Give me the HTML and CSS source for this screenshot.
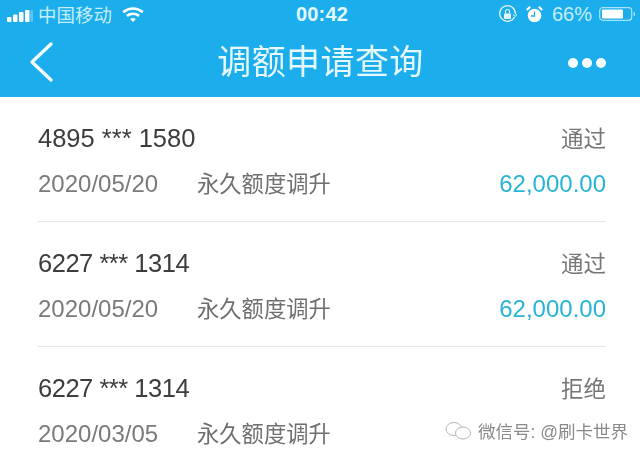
FILE: index.html
```html
<!DOCTYPE html>
<html lang="zh">
<head>
<meta charset="utf-8">
<title>调额申请查询</title>
<link rel="stylesheet" href="styles.css">
</head>
<body>
<div class="page">
  <header class="top">
    <div class="status">
      <div class="status-left">
        <svg class="signal" width="26" height="14" viewBox="0 0 26 14"><rect x="0" y="8" width="4.500" height="5" rx="1" fill="#fff"/><rect x="6" y="5.500" width="4.500" height="7.500" rx="1" fill="#fff"/><rect x="12" y="3" width="4.500" height="10" rx="1" fill="#fff"/><rect x="18" y="1" width="4.500" height="12" rx="1" fill="#fff"/><rect x="23.500" y="1" width="2.500" height="12" rx="1" fill="#fff" opacity=".3"/></svg>
        <span class="carrier">中国移动</span>
        <svg class="wifi" width="24" height="15" viewBox="0 0 24 16"><path d="M1.500 5.500C8 .5 16 .5 22.500 5.500" fill="none" stroke="#fff" stroke-width="2.800"/><path d="M5.500 9.500c3.900-3 9.100-3 13 0" fill="none" stroke="#fff" stroke-width="2.800"/><path d="M9 12.800c1.800-1.300 4.200-1.300 6 0L12 16z" fill="#fff"/></svg>
      </div>
      <div class="clock">00:42</div>
      <div class="status-right">
        <svg class="lock" width="19" height="19" viewBox="0 0 19 19"><path d="M16.500 12A7.800 7.800 0 1 1 17.300 9" fill="none" stroke="#e6f8ff" stroke-width="1.300"/><path d="M15 9.500l2.300 2 1.700-2.500" fill="none" stroke="#e6f8ff" stroke-width="1"/><rect x="6" y="8.500" width="7" height="5.500" rx="1" fill="#e6f8ff"/><path d="M7.500 8.500V6.500a2 2 0 0 1 4 0V8.500" fill="none" stroke="#e6f8ff" stroke-width="1.200"/></svg>
        <svg class="alarm" width="19" height="19" viewBox="0 0 19 19"><circle cx="9.500" cy="10.500" r="6.800" fill="#fff"/><path d="M9.500 6.500V11H6" fill="none" stroke="#1badec" stroke-width="1.300"/><path d="M1.800 5 5.200 1.800M17.200 5 13.800 1.800" stroke="#fff" stroke-width="2.200"/></svg>
        <span class="battery-text">66%</span>
        <svg width="37" height="16" viewBox="0 0 37 16"><rect x=".7" y="1.700" width="32" height="12.600" rx="3" fill="none" stroke="#a8e4fa" stroke-width="1.200"/><rect x="3" y="3.500" width="21" height="9" rx="1" fill="#fff"/><rect x="34.500" y="6" width="1.500" height="4" rx=".7" fill="#a8e4fa"/></svg>
      </div>
    </div>
    <div class="nav">
      <svg class="back" width="26" height="42" viewBox="0 0 26 42"><path d="M23 3 4 21l19 18" fill="none" stroke="#f2fbff" stroke-width="3.400" stroke-linecap="round" stroke-linejoin="round"/></svg>
      <h1 class="title">调额申请查询</h1>
      <div class="more"><i></i><i></i><i></i></div>
    </div>
  </header>
  <main class="list">
    <section class="item">
      <div class="row"><span class="card">4895 *** 1580</span><span class="state">通过</span></div>
      <div class="row row-sub"><span class="date">2020/05/20</span><span class="kind">永久额度调升</span><span class="amount">62,000.00</span></div>
    </section>
    <section class="item">
      <div class="row"><span class="card card-tight">6227 *** 1314</span><span class="state">通过</span></div>
      <div class="row row-sub"><span class="date">2020/05/20</span><span class="kind">永久额度调升</span><span class="amount">62,000.00</span></div>
    </section>
    <section class="item item-last">
      <div class="row"><span class="card card-tight">6227 *** 1314</span><span class="state">拒绝</span></div>
      <div class="row row-sub"><span class="date">2020/03/05</span><span class="kind">永久额度调升</span></div>
    </section>
  </main>
  <div class="mark">
    <svg width="30" height="22" viewBox="0 0 30 22"><ellipse cx="10" cy="9" rx="8" ry="6.500" fill="none" stroke="#b5b5b5" stroke-width="1"/><ellipse cx="19" cy="13" rx="7.500" ry="6" fill="#fff" stroke="#b5b5b5" stroke-width="1"/></svg>
    <span>微信号: @刷卡世界</span>
  </div>
</div>
</body>
</html>
```
FILE: styles.css
```css
* { box-sizing: border-box; }
html, body { margin: 0; padding: 0; }
body { background: #fff; font-family: "Liberation Sans", "Noto Sans CJK SC", sans-serif; }
.page { position: relative; width: 640px; height: 459px; overflow: hidden; filter: blur(.5px); }
.top { background: #1badec; height: 97px; color: #fff; }
.status { height: 28px; padding: 0 4px 0 7px; display: grid; grid-template-columns: 1fr auto 1fr; align-items: center; }
.status-left { display: flex; align-items: center; gap: 5px; }
.signal { margin-top: 3px; }
.carrier { font-size: 18.500px; color: #c5eefb; }
.wifi { margin: 1px 0 0 4px; }
.clock { font-size: 20px; font-weight: 700; letter-spacing: .2px; color: #e3f8ff; margin-left: 1px; }
.status-right { display: flex; align-items: center; justify-content: flex-end; gap: 7px; }
.lock { margin-right: 1px; }
.alarm { margin-right: 1px; }
.battery-text { font-size: 20px; color: #c5eefb; }
.nav { height: 69px; padding: 0 34px 2px 28px; display: flex; align-items: center; justify-content: space-between; }
.title { margin: 0 0 0 19px; font-size: 34px; font-weight: 400; color: #e6f8ff; letter-spacing: .4px; line-height: 40px; }
.more { display: flex; gap: 4px; margin-top: 2px; }
.more i { width: 10px; height: 10px; border-radius: 50%; background: #f6fdff; }
.list { padding: 0 34px 0 38px; }
.item { height: 125px; padding-top: 26px; border-bottom: 1px solid #e8e8e8; }
.item-last { border-bottom: 0; }
.row { display: flex; align-items: center; height: 30px; }
.row-sub { margin-top: 16px; }
.card { flex: 1; font-size: 25.500px; color: #3d3d3d; }
.card-tight { letter-spacing: -.48px; }
.state { font-size: 22.500px; color: #777; margin-top: -2px; }
.date { width: 159px; font-size: 24px; color: #7a7a7a; }
.kind { flex: 1; font-size: 22.300px; color: #6f6f6f; margin-top: -4px; }
.amount { font-size: 24px; color: #28b4d4; }
.mark { position: absolute; left: 444px; top: 418px; display: flex; align-items: center; gap: 4px; font-size: 17.500px; color: #8a8a8a; }
```
